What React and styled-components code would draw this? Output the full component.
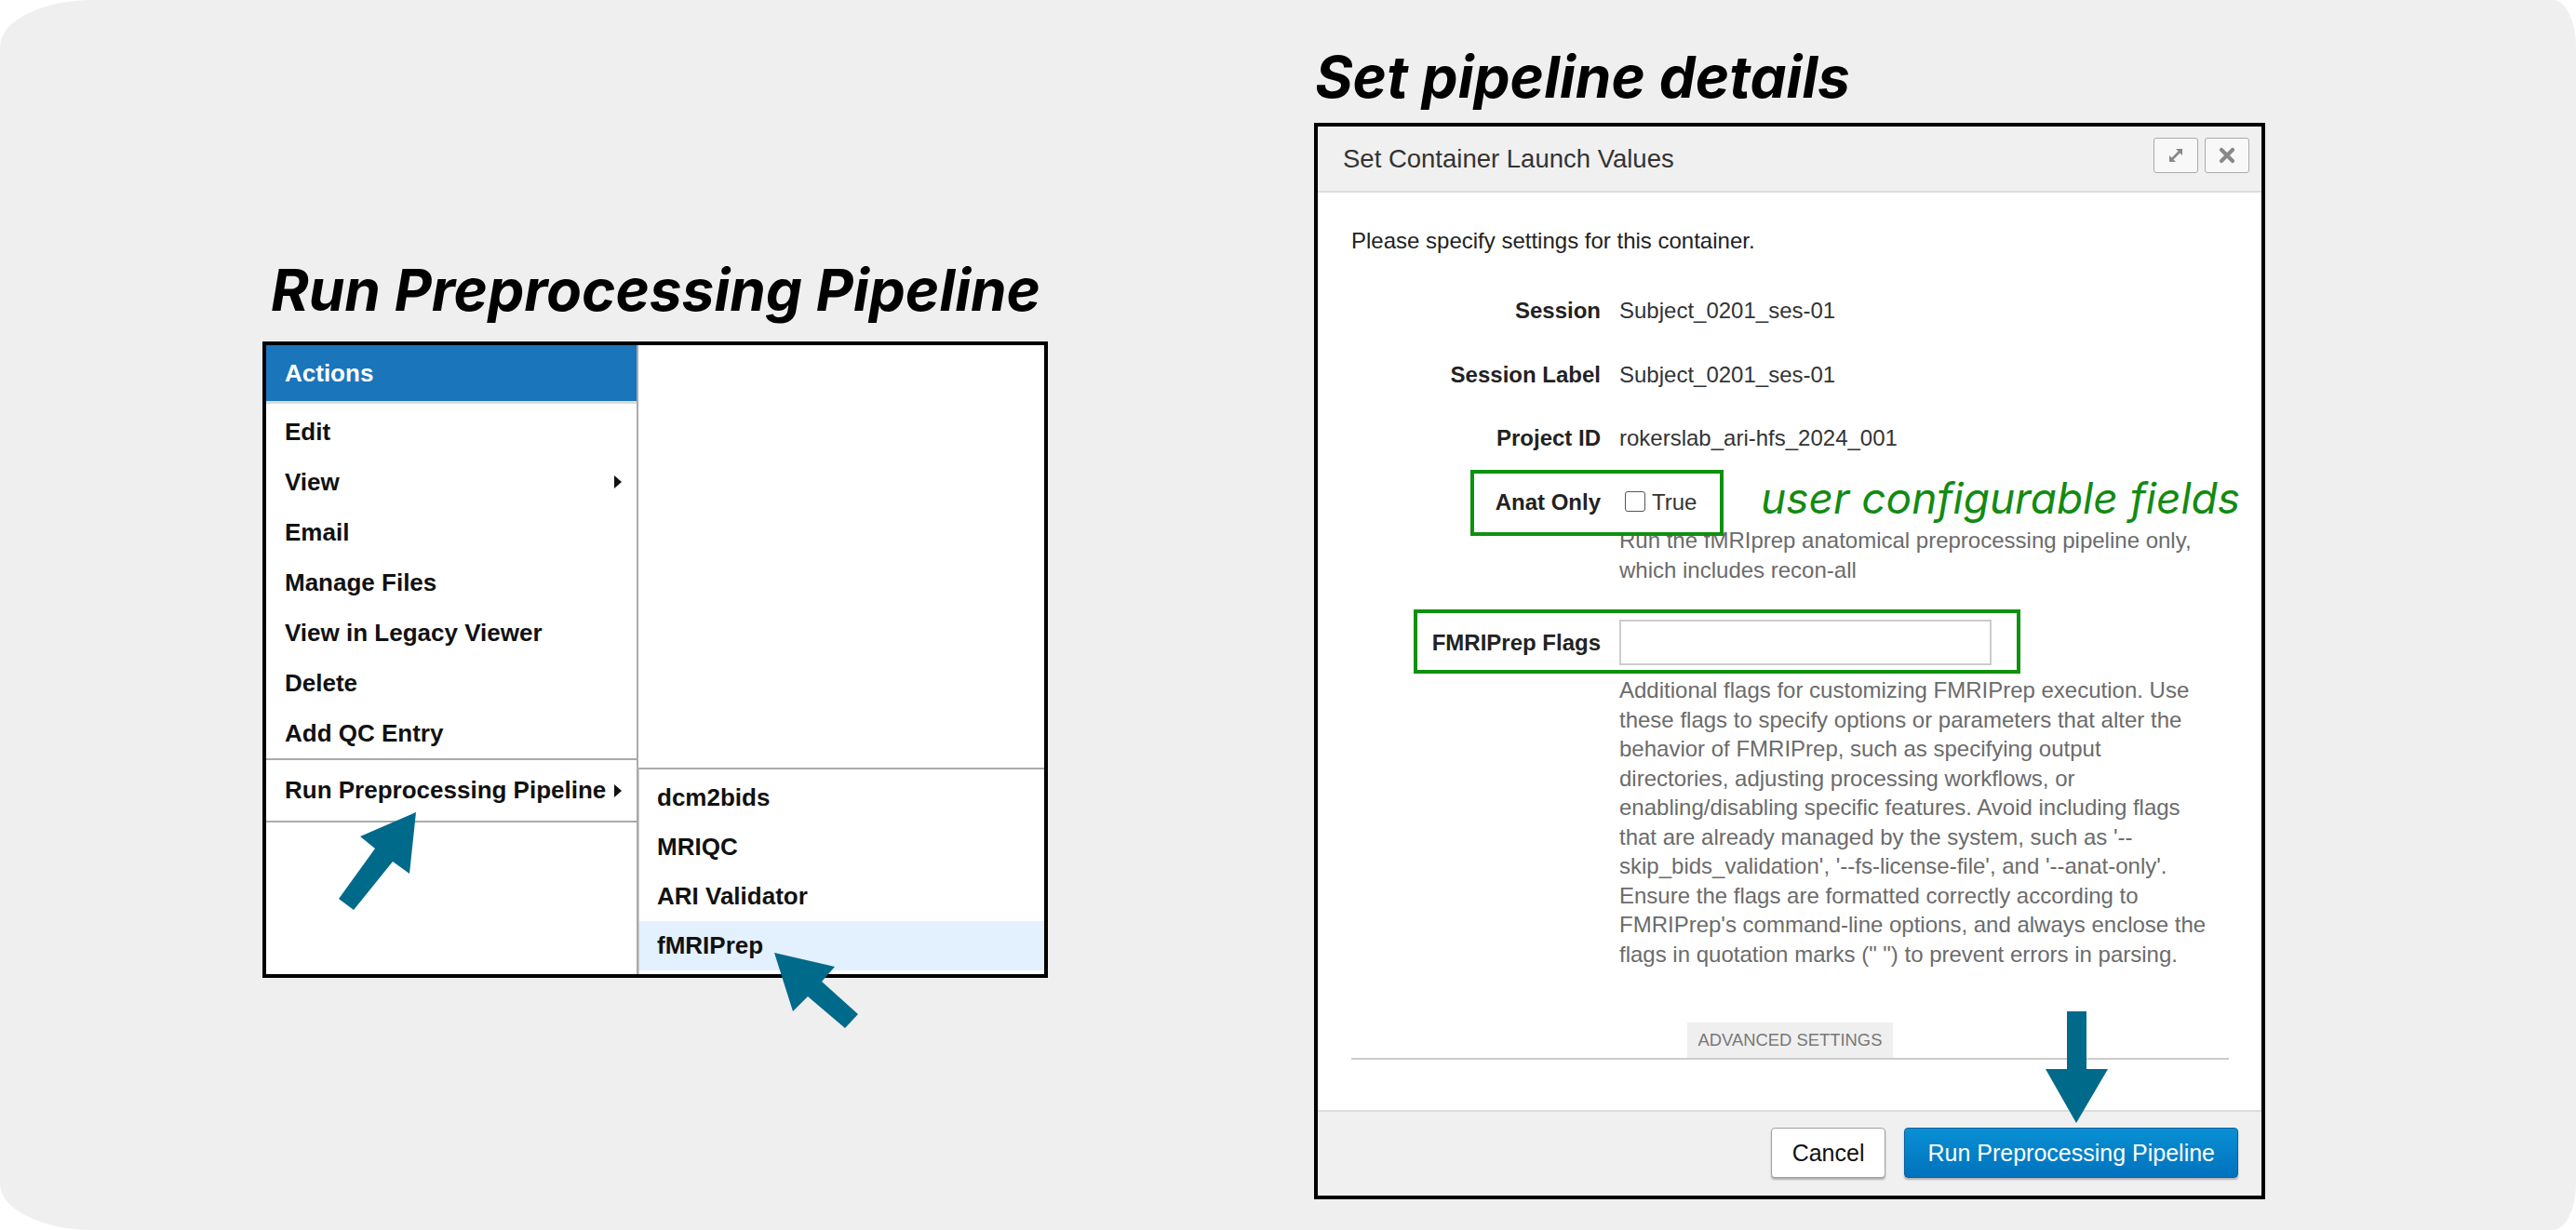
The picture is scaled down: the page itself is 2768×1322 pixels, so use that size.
import React from 'react';
import styled, { createGlobalStyle } from 'styled-components';

const Global = createGlobalStyle`
  html, body { margin: 0; padding: 0; background: #ffffff; }
  body { width: 2768px; height: 1322px; overflow: hidden; }
  * { box-sizing: border-box; }
`;

const Canvas = styled.main`
  width: 2768px;
  height: 1322px;
  background: #efefef;
  border-radius: 100px 25px 25px 100px / 50px 50px 50px 50px;
  display: flex;
  align-items: flex-start;
  padding-left: 282px;
  gap: 286px;
  font-family: "Liberation Sans", Arial, sans-serif;
`;

const Column = styled.section`
  display: flex;
  flex-direction: column;
  align-items: flex-start;
  padding-top: ${(p) => p.$top}px;
`;

const Title = styled.h1`
  margin: 0 0 ${(p) => p.$gap}px ${(p) => p.$indent}px;
  font-family: Inter, "Open Sans", sans-serif;
  font-style: italic;
  font-weight: 700;
  font-size: 62px;
  line-height: 74px;
  color: #000;
  white-space: nowrap;
`;

/* ---------- Left: context menu ---------- */

const MenuFrame = styled.div`
  position: relative;
  display: flex;
  width: 844px;
  height: 684px;
  border: 4px solid #000;
  background: #fff;
`;

const MainMenu = styled.div`
  width: 400px;
  display: flex;
  flex-direction: column;
  border-right: 2px solid #aaa;
`;

const MenuHeader = styled.div`
  height: 63px;
  display: flex;
  align-items: center;
  padding-left: 20px;
  background: #1b75bb;
  border-bottom: 3px solid #dcdcdc;
  color: #fff;
  font-weight: 700;
  font-size: 26px;
`;

const MenuList = styled.div`
  display: flex;
  flex-direction: column;
  padding-top: 3px;
`;

const MenuItem = styled.div`
  height: ${(p) => p.$h || 54}px;
  display: flex;
  align-items: center;
  justify-content: space-between;
  padding: 0 16px 0 ${(p) => p.$pl || 20}px;
  font-weight: 700;
  font-size: 26px;
  color: #111;
  white-space: nowrap;
  background: ${(p) => (p.$active ? '#e3f0fd' : 'transparent')};
`;

const Caret = styled.span`
  width: 0;
  height: 0;
  border-top: 7px solid transparent;
  border-bottom: 7px solid transparent;
  border-left: 8px solid #111;
`;

const DividedGroup = styled.div`
  border-top: 2px solid #aaa;
  border-bottom: 2px solid #aaa;
`;

const SidePane = styled.div`
  flex: 1;
  display: flex;
  flex-direction: column;
  justify-content: flex-end;
`;

const SubMenu = styled.div`
  display: flex;
  flex-direction: column;
  border-top: 2px solid #aaa;
  border-left: 1px solid #ccc;
  padding: 4px 0;
`;

const Pointer = styled.svg`
  position: absolute;
  left: ${(p) => p.$x}px;
  top: ${(p) => p.$y}px;
  overflow: visible;
  fill: #006a8a;
`;

/* ---------- Right: dialog ---------- */

const Dialog = styled.div`
  position: relative;
  width: 1022px;
  height: 1157px;
  border: 4px solid #000;
  background: #fff;
  display: flex;
  flex-direction: column;
  color: #333;
`;

const DialogHeader = styled.header`
  height: 71px;
  display: flex;
  align-items: center;
  justify-content: space-between;
  padding: 0 13px 0 27px;
  background: #f0f0f0;
  border-bottom: 2px solid #ddd;
`;

const DialogTitle = styled.h2`
  margin: 0;
  font-weight: 400;
  font-size: 27.5px;
  color: #333;
`;

const HeaderTools = styled.div`
  display: flex;
  gap: 7px;
  align-self: flex-start;
  margin-top: 12px;
`;

const ToolButton = styled.button`
  width: 48px;
  height: 38px;
  display: flex;
  align-items: center;
  justify-content: center;
  padding: 0;
  background: #f8f8f8;
  border: 1.5px solid #aaa;
  border-radius: 3px;
`;

const DialogBody = styled.div`
  flex: 1;
  padding: 36px 35px 0 36px;
  font-size: 24px;
  line-height: 31.5px;
`;

const Intro = styled.p`
  margin: 0;
  color: #222;
`;

const FieldRow = styled.div`
  position: relative;
  display: grid;
  grid-template-columns: 268px auto;
  column-gap: 20px;
  align-items: center;
  justify-items: start;
  margin-top: ${(p) => p.$mt}px;
  min-height: ${(p) => p.$h || 31.5}px;
`;

const Label = styled.div`
  justify-self: end;
  font-weight: 700;
  color: #222;
  white-space: nowrap;
`;

const Value = styled.div`
  color: #333;
  white-space: nowrap;
`;

const CheckLine = styled.label`
  display: flex;
  align-items: center;
  gap: 7px;
  margin-left: 6px;
  color: #333;
`;

const CheckBox = styled.span`
  width: 22px;
  height: 22px;
  border: 1.5px solid #555;
  border-radius: 3px;
  background: #fff;
`;

const TextInput = styled.div`
  width: 400px;
  height: 49px;
  border: 2px solid #ccc;
  background: #fff;
`;

const Help = styled.div`
  margin: ${(p) => p.$mt}px 0 0 288px;
  width: 640px;
  color: #6b6b6b;
`;

const Highlight = styled.div`
  position: absolute;
  left: ${(p) => p.$x}px;
  top: ${(p) => p.$y}px;
  width: ${(p) => p.$w}px;
  height: ${(p) => p.$h}px;
  border: 4px solid #0e910e;
  pointer-events: none;
`;

const Annotation = styled.span`
  position: absolute;
  left: 440px;
  top: -12px;
  font-family: Inter, "Open Sans", sans-serif;
  font-style: italic;
  font-weight: 400;
  font-size: 46px;
  line-height: 46px;
  color: #138a13;
  white-space: nowrap;
`;

const AdvancedBar = styled.div`
  margin-top: 58px;
  display: flex;
  justify-content: center;
  border-bottom: 2px solid #ccc;
`;

const AdvancedTab = styled.div`
  height: 38px;
  line-height: 38px;
  padding: 0 11.5px;
  background: #efefef;
  color: #777;
  font-size: 18.4px;
  text-transform: uppercase;
`;

const DialogFooter = styled.footer`
  height: 92px;
  display: flex;
  justify-content: flex-end;
  align-items: flex-start;
  gap: 20px;
  padding: 17px 25px 0 0;
  background: #f0f0f0;
  border-top: 2px solid #ddd;
`;

const Button = styled.button`
  height: 54px;
  padding: 0 ${(p) => (p.$primary ? 24 : 22)}px;
  font-family: "Liberation Sans", Arial, sans-serif;
  font-size: 25px;
  border-radius: 4px;
  color: ${(p) => (p.$primary ? '#fff' : '#111')};
  background: ${(p) =>
    p.$primary ? 'linear-gradient(#0a90d4, #0072bd)' : '#fff'};
  border: 1.5px solid ${(p) => (p.$primary ? '#0b5f9e' : '#a0a0a0')};
  box-shadow: 0 2px 2px rgba(0, 0, 0, 0.28);
`;

const ExpandIcon = () => (
  <svg width="22" height="22" viewBox="0 0 22 22">
    <line x1="6" y1="16" x2="16" y2="6" stroke="#888" strokeWidth="2.6" />
    <polygon points="18,4 11,4 18,11" fill="#888" />
    <polygon points="4,18 4,11 11,18" fill="#888" />
  </svg>
);

const CloseIcon = () => (
  <svg width="22" height="22" viewBox="0 0 22 22">
    <path d="M5 5 L17 17 M17 5 L5 17" stroke="#888" strokeWidth="4.2" strokeLinecap="round" />
  </svg>
);

const longHelp =
  "Additional flags for customizing FMRIPrep execution. Use these flags to specify options or parameters that alter the behavior of FMRIPrep, such as specifying output directories, adjusting processing workflows, or enabling/disabling specific features. Avoid including flags that are already managed by the system, such as '--skip_bids_validation', '--fs-license-file', and '--anat-only'. Ensure the flags are formatted correctly according to FMRIPrep's command-line options, and always enclose the flags in quotation marks (\" \") to prevent errors in parsing.";

const menuItems = ['Edit', 'View', 'Email', 'Manage Files', 'View in Legacy Viewer', 'Delete', 'Add QC Entry'];
const pipelines = ['dcm2bids', 'MRIQC', 'ARI Validator', 'fMRIPrep'];

export default function App() {
  return (
    <>
      <Global />
      <Canvas>
        <Column $top={275}>
          <Title $gap={18} $indent={9}>Run Preprocessing Pipeline</Title>
          <MenuFrame>
            <MainMenu>
              <MenuHeader>Actions</MenuHeader>
              <MenuList>
                {menuItems.map((m) => (
                  <MenuItem key={m}>
                    {m}
                    {m === 'View' && <Caret />}
                  </MenuItem>
                ))}
              </MenuList>
              <DividedGroup>
                <MenuItem $h={65}>
                  Run Preprocessing Pipeline
                  <Caret />
                </MenuItem>
              </DividedGroup>
            </MainMenu>
            <SidePane>
              <SubMenu>
                {pipelines.map((p) => (
                  <MenuItem key={p} $h={53} $pl={19} $active={p === 'fMRIPrep'}>
                    {p}
                  </MenuItem>
                ))}
              </SubMenu>
            </SidePane>
            <Pointer $x={78} $y={502} width="83" height="105">
              <polygon points="83,0 76,66 58,53 16,105 0,93 39,39 23,26" />
            </Pointer>
            <Pointer $x={546} $y={653} width="91" height="82">
              <polygon points="0,0 65,15 51,31 90,66 76,81 36,47 20,63" />
            </Pointer>
          </MenuFrame>
        </Column>

        <Column $top={46}>
          <Title $gap={12} $indent={1}>Set pipeline details</Title>
          <Dialog>
            <DialogHeader>
              <DialogTitle>Set Container Launch Values</DialogTitle>
              <HeaderTools>
                <ToolButton aria-label="maximize"><ExpandIcon /></ToolButton>
                <ToolButton aria-label="close"><CloseIcon /></ToolButton>
              </HeaderTools>
            </DialogHeader>
            <DialogBody>
              <Intro>Please specify settings for this container.</Intro>
              <FieldRow $mt={43.5}>
                <Label>Session</Label>
                <Value>Subject_0201_ses-01</Value>
              </FieldRow>
              <FieldRow $mt={37}>
                <Label>Session Label</Label>
                <Value>Subject_0201_ses-01</Value>
              </FieldRow>
              <FieldRow $mt={37}>
                <Label>Project ID</Label>
                <Value>rokerslab_ari-hfs_2024_001</Value>
              </FieldRow>
              <FieldRow $mt={37}>
                <Label>Anat Only</Label>
                <CheckLine>
                  <CheckBox />
                  True
                </CheckLine>
                <Highlight $x={128} $y={-19} $w={272} $h={71} />
                <Annotation>user configurable fields</Annotation>
              </FieldRow>
              <Help $mt={10}>
                Run the fMRIprep anatomical preprocessing pipeline only, which includes recon-all
              </Help>
              <FieldRow $mt={38} $h={49}>
                <Label>FMRIPrep Flags</Label>
                <TextInput />
                <Highlight $x={67} $y={-11} $w={652} $h={69} />
              </FieldRow>
              <Help $mt={11}>{longHelp}</Help>
              <AdvancedBar>
                <AdvancedTab>Advanced Settings</AdvancedTab>
              </AdvancedBar>
            </DialogBody>
            <DialogFooter>
              <Button>Cancel</Button>
              <Button $primary>Run Preprocessing Pipeline</Button>
            </DialogFooter>
            <Pointer $x={782} $y={951} width="67" height="120">
              <rect x="23" y="0" width="21" height="63" />
              <polygon points="0,62 67,62 33,120" />
            </Pointer>
          </Dialog>
        </Column>
      </Canvas>
    </>
  );
}
